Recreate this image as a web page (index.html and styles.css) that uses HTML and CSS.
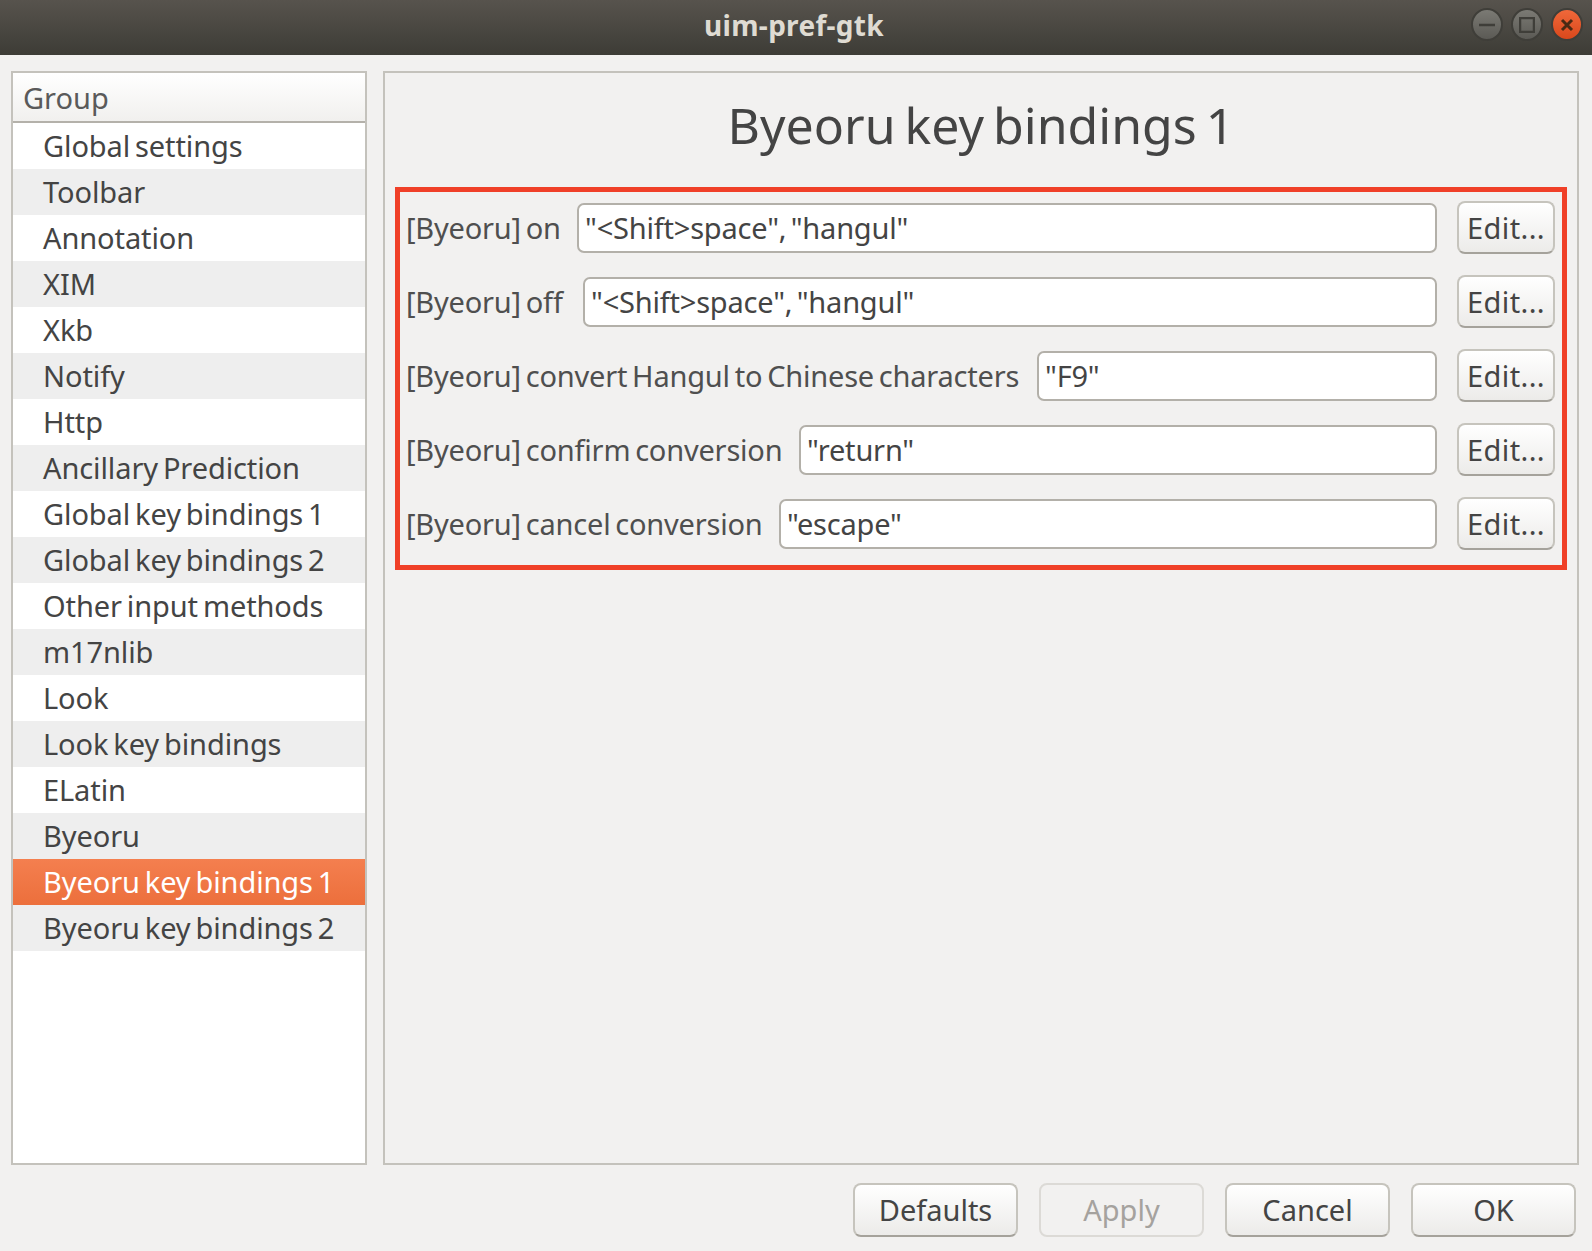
FILE: index.html
```html
<!DOCTYPE html>
<html lang="en">
<head>
    <meta charset="UTF-8">
    <meta name="viewport" content="width=device-width, initial-scale=1.0">
    <title>uim-pref-gtk</title>
    <link rel="stylesheet" href="styles.css">
</head>
<body>
    <header class="titlebar">
        <span class="titlebar-text">uim-pref-gtk</span>
        <div class="window-controls">
            <span class="win-btn">
                <svg width="16" height="16" viewBox="0 0 16 16"><path d="M0 8h16" stroke="#3f3e39" stroke-width="2.5"/></svg>
            </span>
            <span class="win-btn">
                <svg width="16" height="16" viewBox="0 0 16 16"><rect x="1" y="1" width="14" height="14" fill="none" stroke="#3f3e39" stroke-width="2.5"/></svg>
            </span>
            <span class="win-btn win-close">
                <svg width="14" height="14" viewBox="0 0 14 14"><path d="M2 2l10 10M12 2L2 12" stroke="#4a2a14" stroke-width="3"/></svg>
            </span>
        </div>
    </header>

    <main class="content">
        <aside class="group-list">
            <div class="group-header">Group</div>
            <ul class="groups">
                <li>Global settings</li>
                <li>Toolbar</li>
                <li>Annotation</li>
                <li>XIM</li>
                <li>Xkb</li>
                <li>Notify</li>
                <li>Http</li>
                <li>Ancillary Prediction</li>
                <li>Global key bindings 1</li>
                <li>Global key bindings 2</li>
                <li>Other input methods</li>
                <li>m17nlib</li>
                <li>Look</li>
                <li>Look key bindings</li>
                <li>ELatin</li>
                <li>Byeoru</li>
                <li class="selected">Byeoru key bindings 1</li>
                <li>Byeoru key bindings 2</li>
            </ul>
        </aside>

        <section class="settings">
            <h1>Byeoru key bindings 1</h1>
            <div class="highlight">
                <div class="row">
                    <label class="label-on">[Byeoru] on</label>
                    <div class="entry">"&lt;Shift&gt;space", "hangul"</div>
                    <button class="btn-edit">Edit...</button>
                </div>
                <div class="row">
                    <label class="label-off">[Byeoru] off</label>
                    <div class="entry">"&lt;Shift&gt;space", "hangul"</div>
                    <button class="btn-edit">Edit...</button>
                </div>
                <div class="row">
                    <label class="label-convert">[Byeoru] convert Hangul to Chinese characters</label>
                    <div class="entry">"F9"</div>
                    <button class="btn-edit">Edit...</button>
                </div>
                <div class="row">
                    <label class="label-confirm">[Byeoru] confirm conversion</label>
                    <div class="entry">"return"</div>
                    <button class="btn-edit">Edit...</button>
                </div>
                <div class="row">
                    <label class="label-cancel">[Byeoru] cancel conversion</label>
                    <div class="entry">"escape"</div>
                    <button class="btn-edit">Edit...</button>
                </div>
            </div>
        </section>
    </main>

    <footer class="actions">
        <button>Defaults</button>
        <button disabled>Apply</button>
        <button>Cancel</button>
        <button>OK</button>
    </footer>
</body>
</html>
```

FILE: styles.css
```css
* {
    box-sizing: border-box;
}

body {
    font-family: "Noto Sans", Arial, sans-serif;
    font-size: 29px;
    background-color: #f2f1f0;
    color: #444;
    margin: 0;
    height: 1251px;
    overflow: hidden;
}

.titlebar {
    height: 55px;
    padding-bottom: 5px;
    display: flex;
    align-items: center;
    justify-content: center;
    padding-right: 4px;
    position: relative;
    background: linear-gradient(#57534d, #3d3c36);
}

.titlebar-text {
    color: #dfdbd2;
    font-size: 28px;
    font-weight: 700;
    letter-spacing: 0.3px;
}

.window-controls {
    position: absolute;
    right: 9px;
    top: 8px;
    display: flex;
    gap: 8px;
}

.win-btn {
    width: 32px;
    height: 33px;
    border-radius: 50%;
    border: 2px solid #3f3e39;
    background: linear-gradient(#7b7a74, #5b5a55);
    display: flex;
    align-items: center;
    justify-content: center;
}

.win-close {
    background: linear-gradient(#f0683a, #d9481c);
}

.content {
    display: flex;
    gap: 16px;
    height: 1110px;
    padding: 16px 13px 0 11px;
}

.group-list {
    width: 356px;
    border: 2px solid #c4c2bc;
    background-color: #fff;
}

.group-header {
    height: 50px;
    padding: 0 10px;
    display: flex;
    align-items: center;
    color: #5a5a5a;
    border-bottom: 2px solid #b4b1aa;
    background: linear-gradient(#fff, #f1f0ee);
}

.groups {
    list-style: none;
    margin: 0;
    padding: 0;
}

.groups li {
    height: 46px;
    line-height: 46px;
    padding-left: 30px;
    white-space: nowrap;
    letter-spacing: -0.1px;
    word-spacing: -2.5px;
}

.groups li:nth-child(even) {
    background-color: #eeeeee;
}

.groups li.selected {
    color: #fff;
    background: linear-gradient(#f47f4f, #ec6f3c);
}

.settings {
    flex: 1;
    border: 2px solid #c4c2bc;
    padding: 0 10px;
}

.settings h1 {
    height: 114px;
    margin: 0;
    padding-top: 14px;
    text-align: center;
    font-size: 50px;
    font-weight: 400;
    line-height: 76px;
    word-spacing: -4px;
}

.highlight {
    border: 5px solid #f04028;
    padding: 9px 7px 15px 6px;
    display: flex;
    flex-direction: column;
    gap: 21px;
}

.row {
    display: flex;
    align-items: center;
    height: 53px;
}

.row label {
    color: #4f4f4f;
    white-space: nowrap;
    letter-spacing: -0.2px;
    word-spacing: -2.5px;
}

.label-on { width: 171px; }
.label-off { width: 177px; }
.label-convert { width: 631px; }
.label-confirm { width: 393px; }
.label-cancel { width: 373px; }

.entry {
    flex: 1;
    height: 50px;
    line-height: 46px;
    padding: 0 6px;
    border: 2px solid #b3b0a9;
    border-radius: 7px;
    background-color: #fff;
    white-space: nowrap;
    letter-spacing: -0.2px;
    word-spacing: -3px;
}

button {
    font-family: inherit;
    font-size: 29px;
    color: #444;
    padding: 0 0 2px;
    border: 2px solid #c6c4bd;
    border-bottom-color: #a5a29b;
    border-radius: 8px;
    background: linear-gradient(#fff, #ecebe9);
}

.btn-edit {
    width: 98px;
    height: 53px;
    margin-left: 20px;
    padding: 0;
    letter-spacing: 0.4px;
}

.actions {
    display: flex;
    justify-content: flex-end;
    gap: 21px;
    padding: 18px 16px 0 0;
}

.actions button {
    width: 165px;
    height: 54px;
}

.actions button:disabled {
    color: #a5a29e;
    border-color: #dcdad6;
    background: #f2f1f0;
}
```
